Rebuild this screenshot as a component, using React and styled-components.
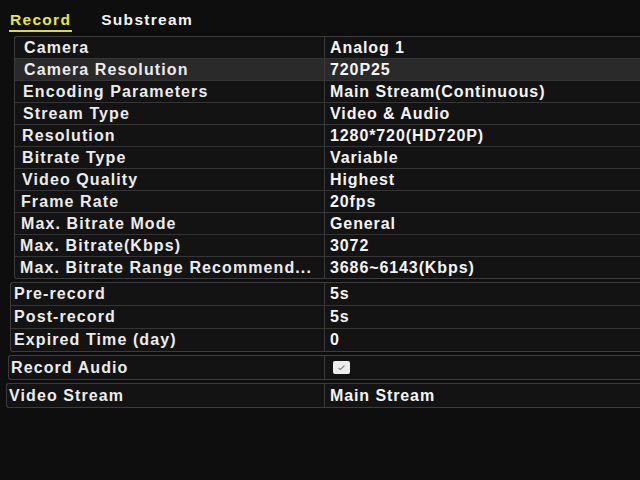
import React from 'react';
import styled, { createGlobalStyle } from 'styled-components';

const GlobalStyle = createGlobalStyle`
  html, body {
    margin: 0;
    padding: 0;
    background: #0c0c0c;
  }
  body {
    width: 640px;
    height: 480px;
    overflow: hidden;
    font-family: "Liberation Sans", Arial, sans-serif;
  }
`;

const Screen = styled.div`
  width: 640px;
  height: 480px;
  background: #0e0e0e;
  padding: 8px 0 0 9px;
  box-sizing: border-box;
  display: flex;
  flex-direction: column;
`;

const TabBar = styled.div`
  display: flex;
  gap: 28px;
  height: 28px;
  align-items: flex-start;
`;

const Tab = styled.div`
  font-size: 15.5px;
  font-weight: 700;
  letter-spacing: 1.3px;
  color: ${(p) => (p.$active ? '#e6e64c' : '#f2f2f2')};
  padding: 3px 1px 1px;
  border-bottom: 2px solid ${(p) => (p.$active ? '#d8d848' : 'transparent')};
`;

const Group = styled.div`
  border: 1px solid #3c3c3c;
  border-right: none;
  border-radius: 3px 0 0 3px;
  background: #131313;
  margin-left: ${(p) => p.$indent || 0}px;
  margin-bottom: 3px;
  display: flex;
  flex-direction: column;
`;

const Row = styled.div`
  display: grid;
  grid-template-columns: ${(p) => p.$labelWidth || 310}px 1fr;
  height: ${(p) => p.$height || 21}px;
  background: ${(p) => (p.$highlight ? '#2a2a2a' : 'transparent')};
  border-bottom: 1px solid #353535;
  &:last-child {
    border-bottom: none;
  }
`;

const Label = styled.div`
  display: flex;
  align-items: center;
  padding-left: ${(p) => p.$pad || 8}px;
  font-size: 16px;
  font-weight: 700;
  letter-spacing: 1.1px;
  color: #ececec;
  white-space: nowrap;
  overflow: hidden;
  border-right: 1px solid #3a3a3a;
`;

const Value = styled.div`
  display: flex;
  align-items: center;
  padding-left: 5px;
  font-size: 16px;
  font-weight: 700;
  letter-spacing: 0.9px;
  color: #f4f4f4;
  white-space: nowrap;
`;

const CheckBox = styled.div`
  width: 17px;
  height: 13px;
  margin-left: 3px;
  background: #ededed;
  border-radius: 2px;
  display: flex;
  align-items: center;
  justify-content: center;
`;

const encoding = [
  ['Camera', 'Analog 1'],
  ['Camera Resolution', '720P25', true],
  ['Encoding Parameters', 'Main Stream(Continuous)'],
  ['Stream Type', 'Video & Audio'],
  ['Resolution', '1280*720(HD720P)'],
  ['Bitrate Type', 'Variable'],
  ['Video Quality', 'Highest'],
  ['Frame Rate', '20fps'],
  ['Max. Bitrate Mode', 'General'],
  ['Max. Bitrate(Kbps)', '3072'],
  ['Max. Bitrate Range Recommend...', '3686~6143(Kbps)'],
];

const timing = [
  ['Pre-record', '5s'],
  ['Post-record', '5s'],
  ['Expired Time (day)', '0'],
];

export default function App() {
  return (
    <Screen>
      <GlobalStyle />
      <TabBar>
        <Tab $active>Record</Tab>
        <Tab>Substream</Tab>
      </TabBar>
      <Group $indent={5}>
        {encoding.map(([label, value, hl], i) => (
          <Row key={label} $highlight={hl}>
            <Label $pad={9 - Math.round(i * 0.4)}>{label}</Label>
            <Value>{value}</Value>
          </Row>
        ))}
      </Group>
      <Group $indent={1}>
        {timing.map(([label, value]) => (
          <Row key={label} $labelWidth={314} $height={22}>
            <Label $pad={3}>{label}</Label>
            <Value>{value}</Value>
          </Row>
        ))}
      </Group>
      <Group $indent={-1}>
        <Row $labelWidth={316} $height={23}>
          <Label $pad={2}>Record Audio</Label>
          <Value>
            <CheckBox>
              <svg width="9" height="7" viewBox="0 0 9 7">
                <path d="M1.5 4 L3.5 5.5 L7.5 1.5" fill="none" stroke="#888" strokeWidth="1.2" />
              </svg>
            </CheckBox>
          </Value>
        </Row>
      </Group>
      <Group $indent={-3}>
        <Row $labelWidth={318} $height={23}>
          <Label $pad={2}>Video Stream</Label>
          <Value>Main Stream</Value>
        </Row>
      </Group>
    </Screen>
  );
}
